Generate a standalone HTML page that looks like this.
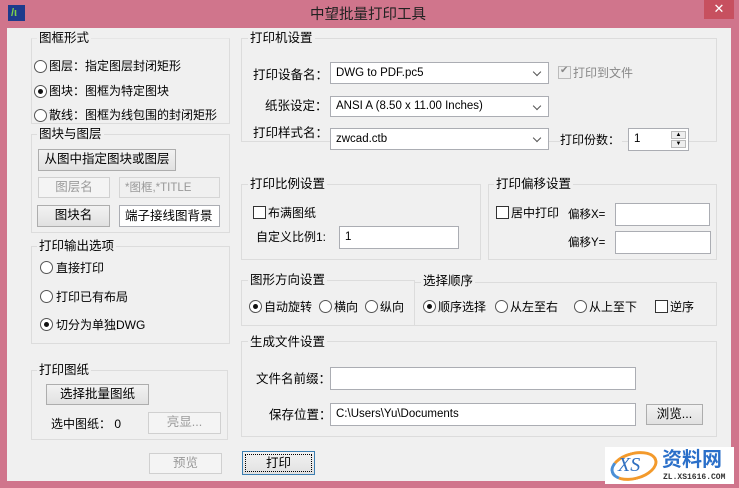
<!DOCTYPE html>
<html><head><meta charset="utf-8"><style>
*{box-sizing:border-box;margin:0;padding:0}
body{width:739px;height:488px;background:#d0758c;position:relative;overflow:hidden;font-family:"Liberation Sans","Noto Sans CJK SC",sans-serif;font-size:12px;color:#000}
.a{position:absolute}
.client{position:absolute;left:7px;top:28px;width:724px;height:453px;background:#f0f0f0}
.g{position:absolute;border:1px solid #dcdcdc}
.gl{position:absolute;background:#f0f0f0;padding:0 2px;font-size:12.5px;line-height:14px;white-space:nowrap}
.t{position:absolute;white-space:nowrap;line-height:14px}
.btn{position:absolute;border:1px solid #adadad;background:linear-gradient(#f2f2f2,#e1e1e1);text-align:center;line-height:19px;font-size:12.5px}
.dis{color:#9a9a9a;border-color:#d0d0d0;background:#f4f4f4}
.in{position:absolute;border:1px solid #abadb3;background:#fff;padding-left:5px;line-height:21px;font-size:11.5px;white-space:nowrap;overflow:hidden}
.cb{position:absolute;border:1px solid #abadb3;background:#fff;padding-left:5px;line-height:21px;font-size:11.5px}
.cb:after{content:"";position:absolute;right:8px;top:6px;width:5px;height:5px;border-right:1.5px solid #555;border-bottom:1.5px solid #555;transform:rotate(45deg)}
.r{position:absolute;width:13px;height:13px;border:1px solid #555;border-radius:50%;background:#fff}
.r.on:after{content:"";position:absolute;left:3px;top:3px;width:5px;height:5px;border-radius:50%;background:#111}
.c{position:absolute;width:13px;height:13px;border:1px solid #333;background:#fff}
</style></head><body>
<div class="a" style="left:8px;top:5px;width:17px;height:16px;background:#1d3b8c"></div>
<div class="a" style="left:11px;top:7px;color:#7fd34a;font-size:11px;font-weight:bold;line-height:12px">/ι</div>
<div class="t" style="left:310px;top:7px;font-size:14.5px;line-height:16px;color:#222">中望批量打印工具</div>
<div class="a" style="left:704px;top:0;width:30px;height:19px;background:#c7505f;color:#fff;text-align:center;line-height:18px;font-size:13px">✕</div>
<div class="client"></div>

<div class="g" style="left:31px;top:38px;width:199px;height:86px;border-top-color:#e6e6e6"></div>
<div class="gl" style="left:37px;top:31px">图框形式</div>
<div class="r" style="left:34px;top:60px"></div><div class="t" style="left:49px;top:59px">图层：指定图层封闭矩形</div>
<div class="r on" style="left:34px;top:85px"></div><div class="t" style="left:49px;top:84px">图块：图框为特定图块</div>
<div class="r" style="left:34px;top:109px"></div><div class="t" style="left:49px;top:108px">散线：图框为线包围的封闭矩形</div>

<div class="g" style="left:31px;top:134px;width:199px;height:99px"></div>
<div class="gl" style="left:37px;top:127px">图块与图层</div>
<div class="btn" style="left:38px;top:149px;width:138px;height:22px">从图中指定图块或图层</div>
<div class="btn dis" style="left:38px;top:177px;width:72px;height:21px">图层名</div>
<div class="in" style="left:119px;top:177px;width:101px;height:21px;border-color:#d5d5d5;background:#f0f0f0;color:#999">*图框,*TITLE</div>
<div class="btn" style="left:37px;top:205px;width:73px;height:22px">图块名</div>
<div class="in" style="left:119px;top:205px;width:101px;height:22px;font-size:12.5px">端子接线图背景</div>

<div class="g" style="left:31px;top:246px;width:199px;height:98px"></div>
<div class="gl" style="left:37px;top:239px">打印输出选项</div>
<div class="r" style="left:40px;top:261px"></div><div class="t" style="left:56px;top:261px">直接打印</div>
<div class="r" style="left:40px;top:290px"></div><div class="t" style="left:56px;top:290px">打印已有布局</div>
<div class="r on" style="left:40px;top:318px"></div><div class="t" style="left:56px;top:318px">切分为单独DWG</div>

<div class="g" style="left:31px;top:370px;width:197px;height:70px"></div>
<div class="gl" style="left:37px;top:363px">打印图纸</div>
<div class="btn" style="left:46px;top:384px;width:103px;height:21px">选择批量图纸</div>
<div class="t" style="left:51px;top:417px">选中图纸：&nbsp;0</div>
<div class="btn dis" style="left:148px;top:412px;width:73px;height:22px">亮显...</div>

<div class="btn dis" style="left:149px;top:453px;width:73px;height:21px">预览</div>
<div class="btn" style="left:242px;top:451px;width:73px;height:24px;border-color:#3c7fb1;outline:1px dotted #000;outline-offset:-4px;line-height:22px">打印</div>

<div class="g" style="left:241px;top:38px;width:476px;height:104px"></div>
<div class="gl" style="left:248px;top:31px">打印机设置</div>
<div class="t" style="left:253px;top:68px;font-size:12.5px">打印设备名：</div>
<div class="cb" style="left:330px;top:62px;width:219px;height:22px">DWG to PDF.pc5</div>
<div class="c" style="left:558px;top:66px;border-color:#bbb;background:#eee"></div><div class="t" style="left:560px;top:64px;color:#888;font-size:10px">✔</div>
<div class="t" style="left:573px;top:66px;color:#888">打印到文件</div>
<div class="t" style="left:265px;top:99px;font-size:12.5px">纸张设定：</div>
<div class="cb" style="left:330px;top:96px;width:219px;height:21px;line-height:19px">ANSI A (8.50 x 11.00 Inches)</div>
<div class="t" style="left:253px;top:126px;font-size:12.5px">打印样式名：</div>
<div class="cb" style="left:330px;top:128px;width:219px;height:22px;background:#fff">zwcad.ctb</div>
<div class="t" style="left:560px;top:133px;background:#f0f0f0;padding-right:2px">打印份数：</div>
<div class="in" style="left:628px;top:128px;width:61px;height:23px">1</div>
<div class="a" style="left:671px;top:131px;width:15px;height:8px;border:1px solid #bbb;background:#eee;font-size:6px;text-align:center;line-height:6px">▲</div>
<div class="a" style="left:671px;top:140px;width:15px;height:8px;border:1px solid #bbb;background:#eee;font-size:6px;text-align:center;line-height:6px">▼</div>

<div class="g" style="left:241px;top:184px;width:240px;height:76px"></div>
<div class="gl" style="left:248px;top:177px">打印比例设置</div>
<div class="c" style="left:253px;top:206px"></div><div class="t" style="left:268px;top:206px">布满图纸</div>
<div class="t" style="left:256px;top:230px">自定义比例1:</div>
<div class="in" style="left:339px;top:226px;width:120px;height:23px">1</div>

<div class="g" style="left:488px;top:184px;width:229px;height:76px"></div>
<div class="gl" style="left:494px;top:177px">打印偏移设置</div>
<div class="c" style="left:496px;top:206px"></div><div class="t" style="left:511px;top:206px">居中打印</div>
<div class="t" style="left:568px;top:208px;font-size:11.5px">偏移X=</div>
<div class="in" style="left:615px;top:203px;width:95px;height:23px"></div>
<div class="t" style="left:568px;top:236px;font-size:11.5px">偏移Y=</div>
<div class="in" style="left:615px;top:231px;width:96px;height:23px"></div>

<div class="g" style="left:241px;top:280px;width:174px;height:46px"></div>
<div class="gl" style="left:248px;top:273px">图形方向设置</div>
<div class="r on" style="left:249px;top:300px"></div><div class="t" style="left:264px;top:300px">自动旋转</div>
<div class="r" style="left:319px;top:300px"></div><div class="t" style="left:334px;top:300px">横向</div>
<div class="r" style="left:365px;top:300px"></div><div class="t" style="left:380px;top:300px">纵向</div>

<div class="g" style="left:414px;top:282px;width:303px;height:44px"></div>
<div class="gl" style="left:421px;top:274px">选择顺序</div>
<div class="r on" style="left:423px;top:300px"></div><div class="t" style="left:438px;top:300px">顺序选择</div>
<div class="r" style="left:495px;top:300px"></div><div class="t" style="left:510px;top:300px">从左至右</div>
<div class="r" style="left:574px;top:300px"></div><div class="t" style="left:589px;top:300px">从上至下</div>
<div class="c" style="left:655px;top:300px"></div><div class="t" style="left:670px;top:300px">逆序</div>

<div class="g" style="left:241px;top:341px;width:476px;height:96px"></div>
<div class="gl" style="left:248px;top:335px">生成文件设置</div>
<div class="t" style="left:256px;top:372px;font-size:12.5px">文件名前缀：</div>
<div class="in" style="left:330px;top:367px;width:306px;height:23px"></div>
<div class="t" style="left:269px;top:408px;font-size:12.5px">保存位置：</div>
<div class="in" style="left:330px;top:403px;width:306px;height:23px">C:\Users\Yu\Documents</div>
<div class="btn" style="left:646px;top:404px;width:57px;height:21px">浏览...</div>

<div class="a" style="left:605px;top:447px;width:129px;height:37px;background:#fff"></div>
<div class="a" style="left:610px;top:452px;width:48px;height:28px;border:3px solid #f39a2c;border-radius:50%;border-left-color:#4a8fd6;transform:rotate(-15deg)"></div>
<div class="t" style="left:618px;top:454px;font-size:20px;line-height:22px;font-style:italic;color:#2e6fc0;font-family:'Liberation Serif',serif">XS</div>
<div class="t" style="left:662px;top:449px;font-size:20px;line-height:22px;font-weight:bold;color:#2a6fc9">资料网</div>
<div class="t" style="left:663px;top:473px;font-size:8px;line-height:9px;color:#333;font-family:'Liberation Mono',monospace;font-weight:bold">ZL.XS1616.COM</div>
</body></html>
